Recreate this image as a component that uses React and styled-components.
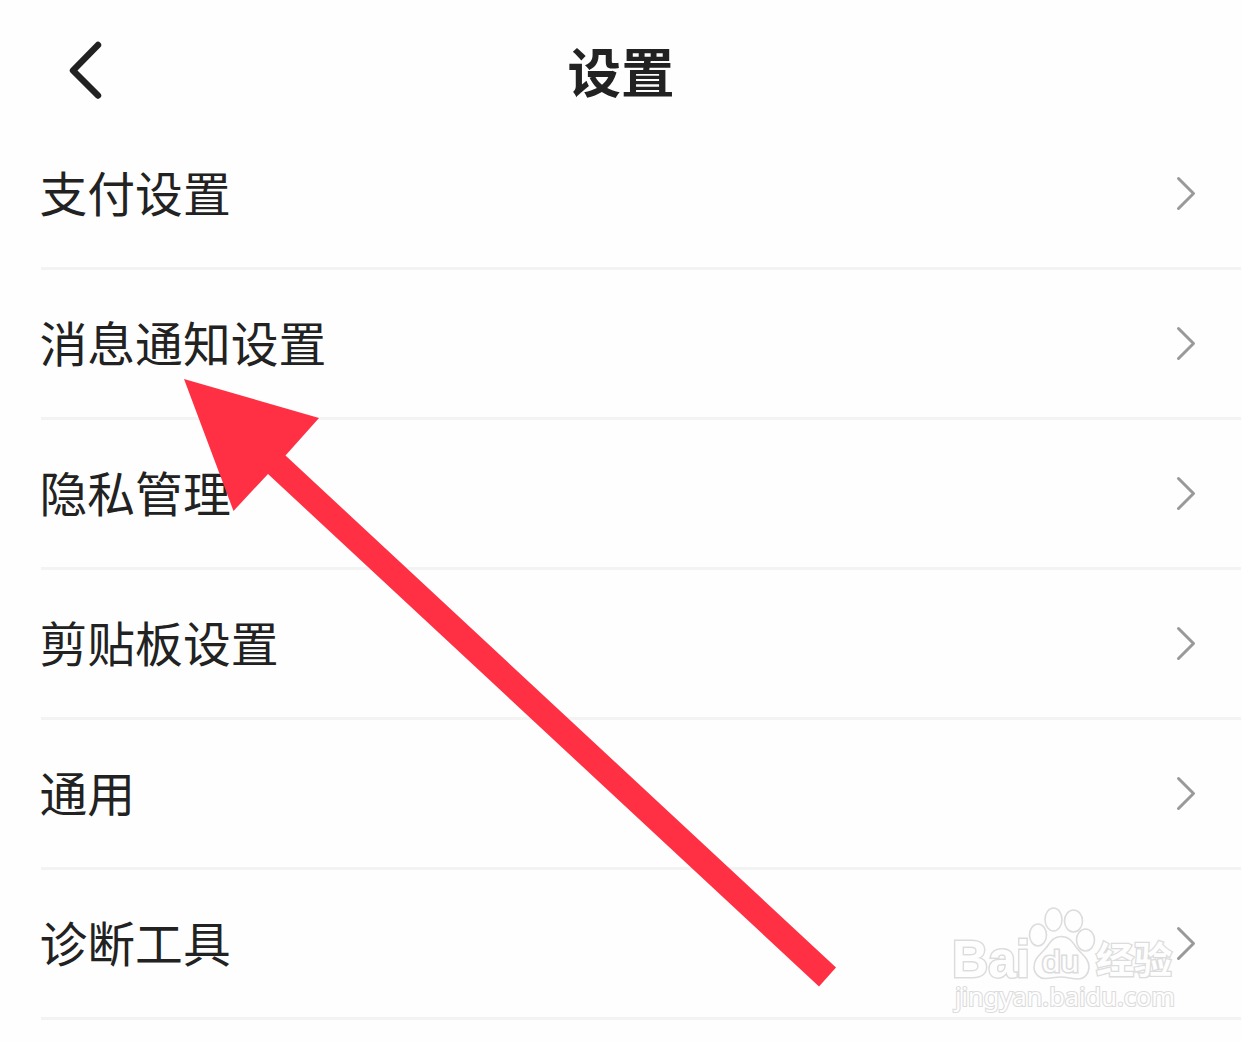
import React from "react";
import styled, { createGlobalStyle } from "styled-components";

const colors = {
  white: "#fefefe",
  text: "#222222",
  line: "#f3f3f3",
  chevron: "#999999",
  red: "#ff3044",
  mark: "#dcdcdc",
};

const GlobalStyle = createGlobalStyle`
  body {
    margin: 0;
    background: ${colors.white};
  }
`;

const Page = styled.div`
  position: relative;
  width: 1242px;
  height: 1041px;
  overflow: hidden;
  background: ${colors.white};
  color: ${colors.text};
  font-family: "Noto Sans CJK SC", sans-serif;
`;

const Header = styled.header`
  display: grid;
  grid-template-columns: 120px 1fr 120px;
  align-items: center;
  height: 120px;
`;

const BackButton = styled.button`
  display: flex;
  margin: 19px 0 0 64px;
  padding: 0;
  border: none;
  background: none;
  color: ${colors.text};
  cursor: pointer;
`;

const Title = styled.h1`
  margin: 20px 0 0;
  font-size: 53.5px;
  font-weight: 700;
  line-height: 80px;
  text-align: center;
`;

const List = styled.ul`
  margin: 0;
  padding: 0 1px 0 41px;
  list-style: none;
`;

const Row = styled.li`
  display: flex;
  justify-content: space-between;
  align-items: center;
  box-sizing: border-box;
  height: 150px;
  padding-right: 43px;
  border-bottom: 3px solid ${colors.line};
`;

const Label = styled.span`
  margin: 0 0 4px -1.5px;
  font-size: 47.8px;
  line-height: 72px;
`;

const Chevron = styled.svg`
  margin-bottom: 1px;
  color: ${colors.chevron};
`;

const Arrow = styled.svg`
  position: absolute;
  left: 0;
  top: 0;
  pointer-events: none;
`;

const Watermark = styled.svg`
  position: absolute;
  left: 945px;
  top: 900px;
  pointer-events: none;
  fill: ${colors.white};
  stroke: ${colors.mark};
  stroke-width: 1.6px;
`;

const MarkText = styled.text`
  font-family: ${(props) => props.$family};
  font-size: ${(props) => props.$size}px;
  font-weight: ${(props) => props.$weight};
  paint-order: stroke;
  stroke-width: ${(props) => props.$stroke || 2.6}px;
`;

const items = [
  "支付设置",
  "消息通知设置",
  "隐私管理",
  "剪贴板设置",
  "通用",
  "诊断工具",
];

const BackIcon = () => (
  <svg width="44" height="64" viewBox="0 0 44 64" fill="none">
    <path
      d="M34 7L9 32.5L34 57.5"
      stroke="currentColor"
      strokeWidth="6.4"
      strokeLinecap="round"
      strokeLinejoin="round"
    />
  </svg>
);

const SettingsRow = ({ label }) => (
  <Row>
    <Label>{label}</Label>
    <Chevron width="24" height="36" viewBox="0 0 24 36" fill="none">
      <path
        d="M4.500 3.500L19.500 18.500L4.500 33.500"
        stroke="currentColor"
        strokeWidth="3"
        strokeLinecap="round"
        strokeLinejoin="round"
      />
    </Chevron>
  </Row>
);

const BaiduMark = () => (
  <Watermark width="240" height="120" viewBox="0 0 240 120">
    <MarkText x="7" y="77" textLength="78" lengthAdjust="spacingAndGlyphs" $family={'"Liberation Sans", sans-serif'} $size={52} $weight={700} $stroke={3}>
      Bai
    </MarkText>
    <ellipse cx="93" cy="35" rx="8.5" ry="11" />
    <ellipse cx="108.5" cy="19.5" rx="8.5" ry="11.5" />
    <ellipse cx="128.5" cy="21" rx="9" ry="11" />
    <ellipse cx="140.5" cy="40" rx="9" ry="11" />
    <path d="M116 36.500C108 36.500 105 43 101 48C96 54 89 58 89 67C89 74 95 79 101 78.500C107 78 111 77 116 77C122 77 127 79 133 79C140 79 144 73 144 67C144 58 136 54 131 47C127 41 124 36.500 116 36.500Z" />
    <MarkText x="97" y="72" textLength="37" lengthAdjust="spacingAndGlyphs" $family={'"Liberation Sans", sans-serif'} $size={30} $weight={400} $stroke={3}>
      du
    </MarkText>
    <MarkText x="151" y="73.500" textLength="76" lengthAdjust="spacingAndGlyphs" $family={'"Noto Sans CJK SC", sans-serif'} $size={37} $weight={700}>
      经验
    </MarkText>
    <MarkText x="10" y="106" textLength="220" lengthAdjust="spacingAndGlyphs" $family={'"Noto Sans", sans-serif'} $size={25} $weight={400} $stroke={2.2}>
      jingyan.baidu.com
    </MarkText>
  </Watermark>
);

const App = () => (
  <>
    <GlobalStyle />
    <Page>
      <Header>
        <BackButton aria-label="返回">
          <BackIcon />
        </BackButton>
        <Title>设置</Title>
      </Header>
      <List>
        {items.map((item) => (
          <SettingsRow key={item} label={item} />
        ))}
      </List>
      <BaiduMark />
      <Arrow width="1242" height="1041" viewBox="0 0 1242 1041">
        <path
          d="M184 379L319 418L285.500 455.500L836 967.500L819 986.500L268 474L233.500 511Z"
          fill={colors.red}
        />
      </Arrow>
    </Page>
  </>
);

export default App;
